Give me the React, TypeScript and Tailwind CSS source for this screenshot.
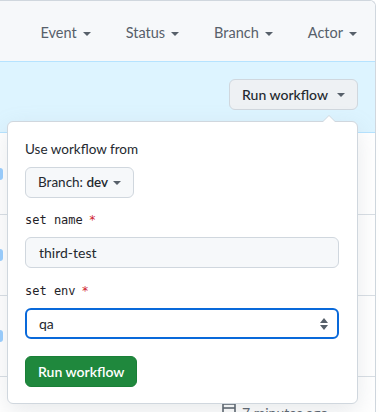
import React from 'react'

const Caret = ({ className = '' }: { className?: string }) => (
  <svg width="8" height="4" viewBox="0 0 8 4" className={className}>
    <path d="M0 0h8L4 4z" fill="currentColor" />
  </svg>
)

const Filter = ({ label }: { label: string }) => (
  <div className="flex items-center gap-[6px] text-[14.5px] text-[#57606a]">
    <span>{label}</span>
    <Caret className="mt-[2px]" />
  </div>
)

const Row = ({ mark }: { mark: boolean }) => (
  <div className="h-[81px] border-t border-[#d8dee4] flex items-center">
    {mark && <div className="w-[3px] h-[12px] bg-[#54aeff] rounded-r-sm opacity-60" />}
  </div>
)

const monoLabel = { fontFamily: '"DejaVu Sans Mono", monospace' }

const App = () => {
  return (
    <div className="w-[379px] h-[412px] overflow-hidden bg-white relative" style={{ fontFamily: 'Lato, "Noto Sans", sans-serif' }}>
      <div className="w-[376px] border-t border-r border-[#d0d7de] rounded-tr-md">
        <div className="h-[61px] bg-[#f6f8fa] border-b border-[#b6e3ff] flex items-center justify-end gap-[35px] pr-[18px] pt-[4px] rounded-tr-md">
          <Filter label="Event" />
          <Filter label="Status" />
          <Filter label="Branch" />
          <Filter label="Actor" />
        </div>
        <div className="h-[71px] bg-[#ddf4ff] border-b border-[#b6e3ff] flex justify-end items-start pt-[17px] pr-[17px]">
          <button className="h-[31px] px-[12px] flex items-center gap-[9px] rounded-md border border-[#d0d7de] bg-[#eef1f4] text-[14px] font-medium text-[#24292f]">
            <span>Run workflow</span>
            <Caret className="text-[#57606a]" />
          </button>
        </div>
        <div className="h-[81px] flex items-center">
          <div className="w-[3px] h-[12px] bg-[#54aeff] rounded-r-sm opacity-60" />
        </div>
        <Row mark />
        <Row mark />
        <div className="h-[40px] border-t border-[#d8dee4] flex items-start pl-[222px] pt-[25px] gap-[6px] text-[14px] text-[#57606a]">
          <svg width="14" height="16" viewBox="0 0 14 16" className="mt-[1px]">
            <rect x="1" y="1" width="12" height="14" fill="none" stroke="#57606a" strokeWidth="1.6" />
            <path d="M1 5h12" stroke="#57606a" strokeWidth="1.6" />
          </svg>
          <span>7 minutes ago</span>
        </div>
      </div>

      <div className="absolute left-[7px] top-[121px] w-[351px] h-[283px] bg-white border border-[#d0d7de] rounded-md shadow-[0_8px_24px_rgba(140,149,159,0.2)] px-[17px] pt-[17px]">
        <div className="absolute -top-[7px] right-[21px] w-0 h-0 border-l-[7px] border-r-[7px] border-b-[7px] border-l-transparent border-r-transparent border-b-[#d0d7de]" />
        <div className="absolute -top-[6px] right-[22px] w-0 h-0 border-l-[6px] border-r-[6px] border-b-[6px] border-l-transparent border-r-transparent border-b-white" />
        <div className="text-[13.5px] leading-[20px] text-[#24292f]">Use workflow from</div>
        <button className="mt-[8px] h-[31px] px-[12px] flex items-center gap-[5px] rounded-md border border-[#d0d7de] bg-[#f6f8fa] text-[13.5px] text-[#24292f]">
          <span>Branch: <span className="font-semibold">dev</span></span>
          <Caret className="text-[#57606a]" />
        </button>
        <div className="mt-[13px] flex items-center gap-[6px] text-[12px] leading-[18px] text-[#1f2328]" style={monoLabel}>
          <span>set name</span>
          <span className="text-[#cf222e]">*</span>
        </div>
        <div className="mt-[8px] h-[31px] w-[314px] rounded-md border border-[#d0d7de] bg-[#f6f8fa] px-[13px] flex items-center text-[14px] text-[#24292f]">
          third-test
        </div>
        <div className="mt-[14px] flex items-center gap-[6px] text-[12px] leading-[18px] text-[#1f2328]" style={monoLabel}>
          <span>set env</span>
          <span className="text-[#cf222e]">*</span>
        </div>
        <div className="mt-[8px] h-[31px] w-[314px] rounded-md border-2 border-[#0969da] bg-white pl-[12px] pr-[8px] flex items-center justify-between text-[14px] text-[#24292f]">
          <span>qa</span>
          <svg width="10" height="14" viewBox="0 0 10 14">
            <path d="M5 1l4 5H1z M5 13l4-5H1z" fill="#57606a" />
          </svg>
        </div>
        <button className="mt-[17px] h-[31px] px-[12px] rounded-md bg-[#1f883d] border border-[#1a7f37] text-white text-[14px] font-semibold">
          Run workflow
        </button>
      </div>
    </div>
  )
}

export default App
